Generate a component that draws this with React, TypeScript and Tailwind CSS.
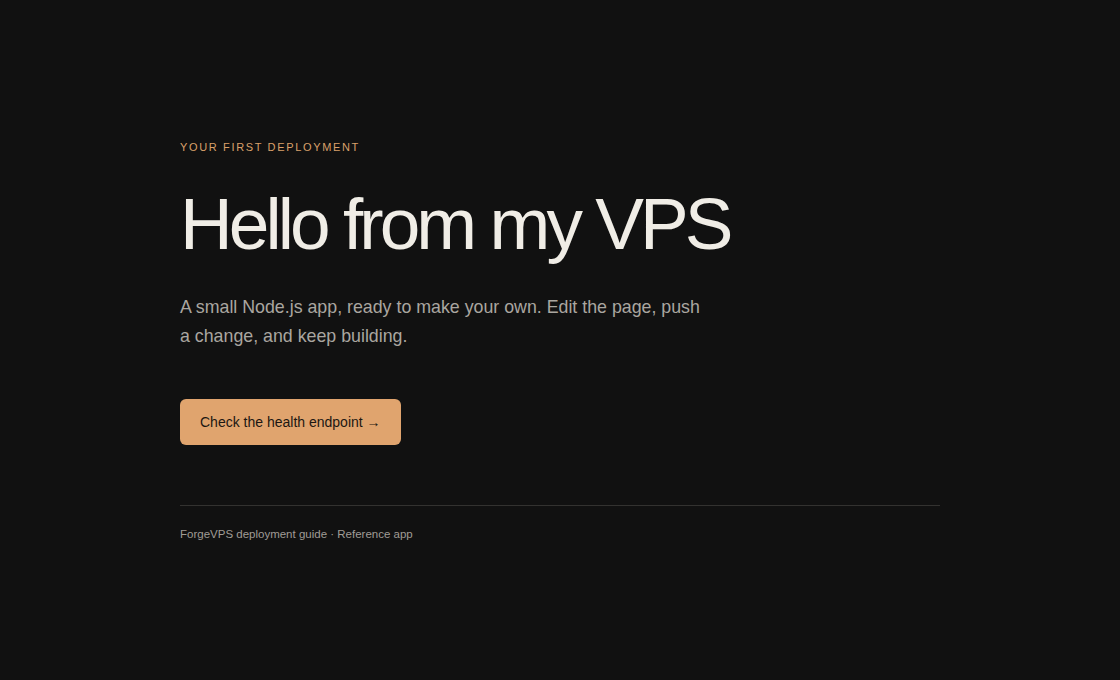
export default function App() {
  return (
    <div className="min-h-screen bg-[#111111] flex items-center font-['Liberation_Sans',Arial,sans-serif]">
      <main className="w-full max-w-[760px] mx-auto">
        <p className="text-[11px] leading-[22px] uppercase tracking-[0.15em] text-[#d9a06a]">Your first deployment</p>
        <h1 className="mt-[26px] text-[73px] leading-[80px] tracking-[-0.054em] text-[#f0ede6]">Hello from my VPS</h1>
        <p className="mt-[29px] max-w-[525px] text-[17.8px] leading-[29px] text-[#aaa6a0]">
          A small Node.js app, ready to make your own. Edit the page, push a change, and keep building.
        </p>
        <a
          href="#health"
          className="mt-[48px] inline-flex items-center h-[46px] px-5 rounded-md bg-[#e0a46e] text-[14px] text-[#1c1712]"
        >
          Check the health endpoint →
        </a>
        <footer className="mt-[60px] pt-[20px] border-t border-[#333230] text-[11.5px] text-[#a09c96]">
          ForgeVPS deployment guide · Reference app
        </footer>
      </main>
    </div>
  );
}
